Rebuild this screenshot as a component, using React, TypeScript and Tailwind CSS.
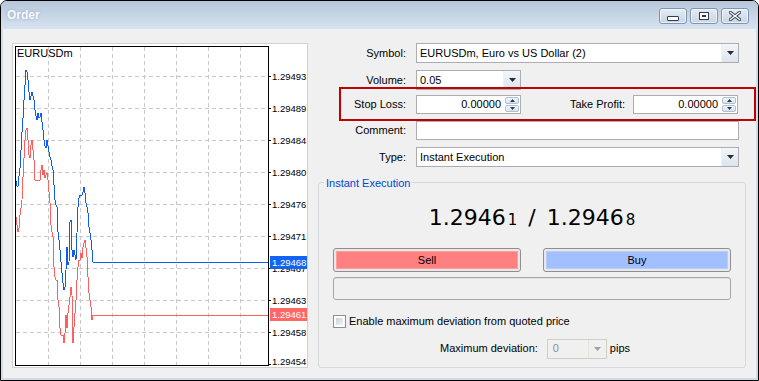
import React from "react";

const F = { fontFamily: '"Liberation Sans", Arial, sans-serif' };

const bluePts =
  "16,181 17,186 18,186 19,176 20,168 21,150 22,132 23,118 24,100 25,85 26,70 27,72 28,80 29,92 30,100 31,96 32,92 33,96 34,100 35,110 36,116 37,120 38,113 39,118 40,117 41,113 42,122 43,130 44,140 45,146 46,148 47,140 48,146 49,152 50,157 51,160 52,166 53,170 54,185 55,200 56,205 57,207 58,232 59,240 60,250 61,262 62,273 63,283 64,290 65,287 66,270 67,247 68,265 69,262 70,222 71,220 72,250 73,257 74,250 75,255 76,260 77,233 78,207 79,198 80,195 81,195 82,195 83,192 84,187 85,193 86,203 87,207 88,213 89,227 90,233 91,240 92,250 93,262 268,262";
const redPts =
  "16,217 17,225 18,232 19,228 20,215 21,208 22,200 23,177 24,158 25,140 26,130 27,128 28,140 29,155 30,158 31,145 32,140 33,150 34,160 35,180 36,180 40,180 41,170 42,165 43,175 44,170 45,178 46,175 47,173 48,180 49,192 50,203 51,225 52,232 53,237 54,267 55,277 56,280 57,280 58,300 59,307 60,328 61,335 63,335 64,343 65,333 66,315 67,328 68,313 69,305 70,297 71,287 72,295 73,343 74,327 75,313 76,300 77,280 78,267 79,260 80,260 81,253 82,258 83,247 84,243 85,240 86,248 87,257 88,277 89,293 90,300 91,307 92,320 93,315 268,315";

const ticks: [number, string][] = [
  [76, "1.29493"],
  [108, "1.29489"],
  [140, "1.29484"],
  [172, "1.29480"],
  [204, "1.29476"],
  [236, "1.29471"],
  [268, "1.29467"],
  [300, "1.29463"],
  [332, "1.29458"],
  [364, "1.29454"],
];

function Chart() {
  const vx = [48, 80, 112, 144, 176, 208, 240];
  const hy = [76, 108, 140, 172, 204, 236, 268, 300, 332];
  return (
    <div className="w-[296px] h-[325px] border border-[#d2d2d2] bg-white">
      <svg width={294} height={323} viewBox="13 44 294 323" style={{ display: "block" }}>
        {vx.map((x) => (
          <line key={"v" + x} x1={x + 0.5} y1={47} x2={x + 0.5} y2={365} stroke="#c8c8c8" strokeDasharray="4 3" />
        ))}
        {hy.map((y) => (
          <line key={"h" + y} x1={16} y1={y + 0.5} x2={268} y2={y + 0.5} stroke="#c8c8c8" strokeDasharray="4 3" />
        ))}
        <polyline points={redPts} fill="none" stroke="#ff5f5f" strokeWidth={1} shapeRendering="crispEdges" />
        <polyline points={bluePts} fill="none" stroke="#0f5cf5" strokeWidth={1} shapeRendering="crispEdges" />
        <rect x={15.5} y={46.5} width={253} height={319} fill="none" stroke="#000" shapeRendering="crispEdges" />
        {ticks.map(([y]) => (
          <line key={"t" + y} x1={268} y1={y + 0.5} x2={271} y2={y + 0.5} stroke="#000" />
        ))}
        <text x={17} y={57} fontSize={11} fill="#000" style={F}>EURUSDm</text>
        {ticks.map(([y, t]) => (
          <text key={"l" + y} x={272} y={Math.min(y + 4, 365)} fontSize={9.5} fill="#000" style={F}>
            {t}
          </text>
        ))}
        <rect x={270} y={256} width={37} height={13} fill="#1464f4" />
        <text x={272} y={266} fontSize={9.5} fill="#fff" style={F}>1.29468</text>
        <rect x={270} y={308} width={37} height={13} fill="#ff6666" />
        <text x={272} y={318} fontSize={9.5} fill="#fff" style={F}>1.29461</text>
      </svg>
    </div>
  );
}

function Arrow({ color = "#2b2b2b" }: { color?: string }) {
  return (
    <svg width="7" height="4" viewBox="0 0 7 4">
      <path d="M0 0h7L3.5 4z" fill={color} />
    </svg>
  );
}

function Combo({ text, className }: { text: string; className: string }) {
  return (
    <div className={"h-[20px] border border-[#abadb3] bg-white flex items-stretch " + className}>
      <div className="flex-1 flex items-center pl-[3px] text-[11px] text-black">{text}</div>
      <div className="w-[17px] flex items-center justify-center bg-gradient-to-b from-[#f3f6fa] to-[#dce4ee] border-l border-[#eef1f5]">
        <Arrow />
      </div>
    </div>
  );
}

function Spin() {
  const half = "flex-1 flex items-center justify-center border border-[#b1bfd1] rounded-[2px] bg-gradient-to-b from-[#f5f8fc] to-[#d8e2ee]";
  return (
    <div className="w-[16px] flex flex-col gap-[1px] p-[1px]">
      <div className={half}>
        <svg width="5" height="3" viewBox="0 0 5 3"><path d="M0 3h5L2.5 0z" fill="#243a5e" /></svg>
      </div>
      <div className={half}>
        <svg width="5" height="3" viewBox="0 0 5 3"><path d="M0 0h5L2.5 3z" fill="#243a5e" /></svg>
      </div>
    </div>
  );
}

function SpinInput({ value }: { value: string }) {
  return (
    <div className="w-[105px] h-[19px] border border-[#abadb3] bg-white flex items-stretch">
      <div className="flex-1 flex items-center justify-end pr-[3px] text-[11px] text-black">{value}</div>
      <Spin />
    </div>
  );
}

function Label({ children }: { children: React.ReactNode }) {
  return <div className="w-[88px] text-right text-[11px] text-black">{children}</div>;
}

function TitleButton({ children }: { children: React.ReactNode }) {
  return (
    <div className="w-[28px] h-[16px] rounded-[3px] border border-[#8295af] bg-gradient-to-b from-[#e4ecf5] to-[#c8d5e5] shadow-[inset_0_0_0_1px_rgba(255,255,255,0.6)] flex items-center justify-center">
      {children}
    </div>
  );
}

export default function App() {
  return (
    <div style={F} className="w-[759px] h-[381px] border border-black rounded-t-[7px] overflow-hidden flex flex-col bg-[#f0f0f0]">
      {/* title bar */}
      <div className="h-[28px] shrink-0 bg-gradient-to-b from-[#b7c7da] to-[#d5e2f0] flex items-center pl-[6px] pr-[9px]">
        <div className="flex-1 text-[12px] font-bold text-[#f7f9fc] [text-shadow:0_0_3px_rgba(120,140,170,0.6)]">Order</div>
        <div className="flex items-center gap-[3px] mt-[2px]">
          <TitleButton>
            <div className="w-[12px] h-[5px] mt-[4px] rounded-[1px] border border-[#2d3d55] bg-white" />
          </TitleButton>
          <TitleButton>
            <div className="w-[10px] h-[8px] border border-[#2d3d55] bg-white flex items-center justify-center">
              <div className="w-[4px] h-[2px] border border-[#2d3d55]" />
            </div>
          </TitleButton>
          <TitleButton>
            <svg width="12" height="10" viewBox="0 0 12 10">
              <path d="M1.5 1.5l9 7M10.5 1.5l-9 7" stroke="#2d3d55" strokeWidth="3.2" strokeLinecap="square" />
              <path d="M1.5 1.5l9 7M10.5 1.5l-9 7" stroke="#ffffff" strokeWidth="1.4" strokeLinecap="square" />
            </svg>
          </TitleButton>
        </div>
      </div>

      {/* body */}
      <div className="flex-1 flex border-l-2 border-r-2 border-b-2 border-[#cddbeb] pl-[9px] pt-[14px] pb-[8px] pr-[9px] gap-[10px] relative">
        <Chart />

        <div className="w-[428px] flex flex-col">
          <div className="flex items-center gap-[10px] h-[20px]">
            <Label>Symbol:</Label>
            <Combo text="EURUSDm, Euro vs US Dollar (2)" className="w-[323px]" />
          </div>
          <div className="flex items-center gap-[10px] h-[20px] mt-[7px]">
            <Label>Volume:</Label>
            <Combo text="0.05" className="w-[105px]" />
          </div>
          <div className="flex items-center h-[19px] mt-[5px]">
            <div className="flex items-center gap-[10px]">
              <Label>Stop Loss:</Label>
              <SpinInput value="0.00000" />
            </div>
            <div className="ml-[26px] w-[78px] text-right text-[11px] text-black">Take Profit:</div>
            <div className="ml-[8px]">
              <SpinInput value="0.00000" />
            </div>
          </div>
          <div className="flex items-center gap-[10px] h-[19px] mt-[7px]">
            <Label>Comment:</Label>
            <div className="w-[323px] h-[19px] border border-[#abadb3] bg-white" />
          </div>
          <div className="flex items-center gap-[10px] h-[20px] mt-[7px]">
            <Label>Type:</Label>
            <Combo text="Instant Execution" className="w-[323px]" />
          </div>

          {/* group */}
          <div className="relative mt-[15px] h-[186px] border border-[#d5d9dc] rounded-[3px] px-[14px] flex flex-col">
            <div className="absolute left-[5px] -top-[8px] px-[2px] bg-[#f0f0f0] text-[11px] text-[#0046d5]">Instant Execution</div>
            <div className="h-[64px] flex items-baseline justify-center pt-[24px] text-black leading-none" style={{ fontFamily: '"DejaVu Sans", sans-serif' }}>
              <span className="text-[22px]">1.2946</span>
              <span className="text-[15px] ml-[2px]">1</span>
              <span className="text-[22px] mx-[11px]">/</span>
              <span className="text-[22px]">1.2946</span>
              <span className="text-[15px] ml-[2px]">8</span>
            </div>
            <div className="flex gap-[22px] mt-[1px]">
              <div className="w-[188px] h-[24px] rounded-[3px] border border-[#8f8f8f] bg-[#e8e8e8] p-[2px]">
                <div className="h-full bg-[#ff8080] border border-[#ff9c9c] flex items-center justify-center text-[11px] text-black">Sell</div>
              </div>
              <div className="w-[188px] h-[24px] rounded-[3px] border border-[#8f8f8f] bg-[#e8e8e8] p-[2px]">
                <div className="h-full bg-[#a2bfff] border border-[#b6ccff] flex items-center justify-center text-[11px] text-black">Buy</div>
              </div>
            </div>
            <div className="mt-[5px] h-[23px] rounded-[3px] border border-[#a8a8a8] bg-[#f0f0f0] shadow-[inset_0_1px_0_#e2e2e2]" />
            <div className="mt-[13px] flex items-center gap-[3px]">
              <div className="w-[13px] h-[13px] border border-[#8e8f8f] bg-white p-[2px]">
                <div className="w-full h-full bg-gradient-to-br from-[#cbcfd5] to-[#f4f4f4]" />
              </div>
              <span className="text-[11px] text-black">Enable maximum deviation from quoted price</span>
            </div>
            <div className="mt-[9px] flex items-center">
              <span className="ml-[107px] text-[11px] text-black">Maximum deviation:</span>
              <div className="ml-[9px] w-[60px] h-[20px] border border-[#cfd0c4] bg-[#f0f0f0] flex items-stretch">
                <div className="flex-1 flex items-center pl-[5px] text-[11px] text-[#8d8d8d]">0</div>
                <div className="w-[18px] flex items-center justify-center border-l border-[#e3e4dc]">
                  <Arrow color="#a0a0a0" />
                </div>
              </div>
              <span className="ml-[3px] text-[11px] text-black">pips</span>
            </div>
          </div>
        </div>

        {/* annotation box */}
        <div className="absolute left-[336px] top-[58px] w-[417px] h-[34px] border-2 border-[#c00000] pointer-events-none" />
      </div>
    </div>
  );
}
